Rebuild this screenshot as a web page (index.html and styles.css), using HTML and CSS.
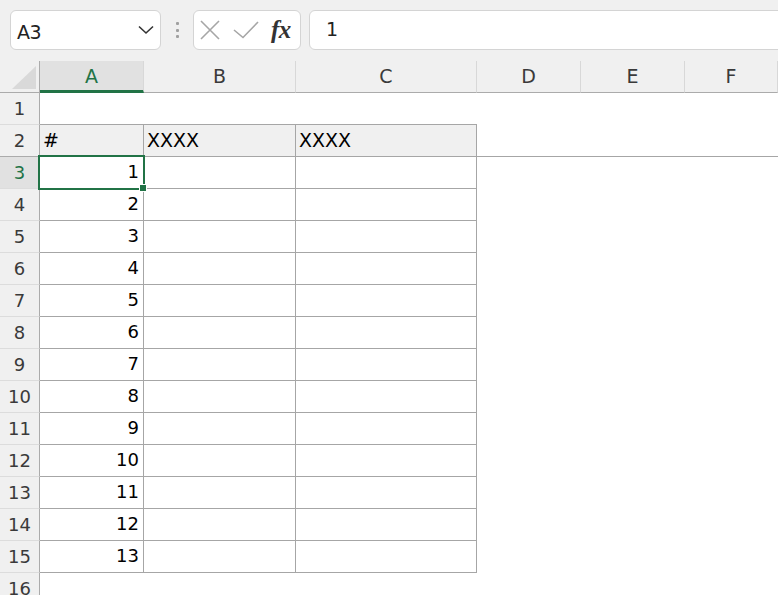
FILE: index.html
```html
<!DOCTYPE html>
<html lang="ja">
<head>
<meta charset="utf-8">
<title>Sheet</title>
<link rel="stylesheet" href="styles.css">
</head>
<body>
<div class="toolbar">
  <div class="namebox">
    <span class="name">A3</span>
    <svg class="chev" width="16" height="10" viewBox="0 0 16 10"><polyline points="1,1.5 8,8 15,1.5" fill="none" stroke="#333" stroke-width="1.6"/></svg>
  </div>
  <div class="grip"><i></i><i></i><i></i></div>
  <div class="fxbox">
    <svg class="ico" width="20" height="20" viewBox="0 0 20 20"><path d="M1 1 L19 19 M19 1 L1 19" stroke="#a6a6a6" stroke-width="1.6" fill="none"/></svg>
    <svg class="ico" width="26" height="18" viewBox="0 0 26 18"><polyline points="1,9 10,16.5 25,1" stroke="#a6a6a6" stroke-width="1.6" fill="none"/></svg>
    <span class="fx">fx</span>
  </div>
  <div class="formula">1</div>
</div>
<div class="sheet">
  <div class="corner"><span class="tri"></span></div>
  <div class="ch on">A</div><div class="ch">B</div><div class="ch">C</div><div class="ch">D</div><div class="ch">E</div><div class="ch">F</div>

  <div class="rh">1</div><div class="c top"></div><div class="c top"></div><div class="c top"></div><div class="c"></div><div class="c"></div><div class="c"></div>
  <div class="rh frz">2</div><div class="c t hd">#</div><div class="c t hd">XXXX</div><div class="c t hd">XXXX</div><div class="c frz"></div><div class="c frz"></div><div class="c frz"></div>
  <div class="rh on">3</div><div class="c t num sel">1<span class="selbox"></span><span class="handle"></span></div><div class="c t"></div><div class="c t"></div><div class="c"></div><div class="c"></div><div class="c"></div>
  <div class="rh">4</div><div class="c t num">2</div><div class="c t"></div><div class="c t"></div><div class="c"></div><div class="c"></div><div class="c"></div>
  <div class="rh">5</div><div class="c t num">3</div><div class="c t"></div><div class="c t"></div><div class="c"></div><div class="c"></div><div class="c"></div>
  <div class="rh">6</div><div class="c t num">4</div><div class="c t"></div><div class="c t"></div><div class="c"></div><div class="c"></div><div class="c"></div>
  <div class="rh">7</div><div class="c t num">5</div><div class="c t"></div><div class="c t"></div><div class="c"></div><div class="c"></div><div class="c"></div>
  <div class="rh">8</div><div class="c t num">6</div><div class="c t"></div><div class="c t"></div><div class="c"></div><div class="c"></div><div class="c"></div>
  <div class="rh">9</div><div class="c t num">7</div><div class="c t"></div><div class="c t"></div><div class="c"></div><div class="c"></div><div class="c"></div>
  <div class="rh">10</div><div class="c t num">8</div><div class="c t"></div><div class="c t"></div><div class="c"></div><div class="c"></div><div class="c"></div>
  <div class="rh">11</div><div class="c t num">9</div><div class="c t"></div><div class="c t"></div><div class="c"></div><div class="c"></div><div class="c"></div>
  <div class="rh">12</div><div class="c t num">10</div><div class="c t"></div><div class="c t"></div><div class="c"></div><div class="c"></div><div class="c"></div>
  <div class="rh">13</div><div class="c t num">11</div><div class="c t"></div><div class="c t"></div><div class="c"></div><div class="c"></div><div class="c"></div>
  <div class="rh">14</div><div class="c t num">12</div><div class="c t"></div><div class="c t"></div><div class="c"></div><div class="c"></div><div class="c"></div>
  <div class="rh">15</div><div class="c t num">13</div><div class="c t"></div><div class="c t"></div><div class="c"></div><div class="c"></div><div class="c"></div>
  <div class="rh">16</div><div class="c"></div><div class="c"></div><div class="c"></div><div class="c"></div><div class="c"></div><div class="c"></div>
</div>
</body>
</html>
```

FILE: styles.css
```css
* { box-sizing: border-box; }
html, body {
  margin: 0;
  padding: 0;
  width: 778px;
  height: 595px;
  overflow: hidden;
  background: #ffffff;
  font-family: "DejaVu Sans", "Noto Sans CJK JP", sans-serif;
  color: #000;
}

/* ---------- toolbar ---------- */
.toolbar {
  height: 61px;
  background: #f0f0f0;
  display: flex;
  align-items: flex-start;
  padding: 10px 0 0 10px;
  overflow: hidden;
}
.namebox {
  width: 151px;
  height: 40px;
  background: #fff;
  border: 1px solid #d4d4d4;
  border-radius: 6px;
  display: flex;
  align-items: center;
  justify-content: space-between;
  padding: 3px 6px 0 6px;
}
.name {
  font-size: 19px;
  color: #222;
  letter-spacing: -0.5px;
}
.chev { margin-top: -3px; }
.grip {
  width: 32px;
  height: 40px;
  display: flex;
  flex-direction: column;
  align-items: center;
  justify-content: center;
  gap: 3.5px;
}
.grip i {
  display: block;
  width: 3px;
  height: 3px;
  background: #a0a0a0;
  border-radius: 1px;
}
.fxbox {
  width: 108px;
  height: 40px;
  background: #fff;
  border: 1px solid #d4d4d4;
  border-radius: 6px;
  display: flex;
  align-items: center;
  padding: 0 0 0 6px;
  gap: 13px;
}
.fxbox .ico { flex: none; }
.fx {
  font-family: "Liberation Serif", "DejaVu Serif", serif;
  font-style: italic;
  font-weight: bold;
  font-size: 25px;
  color: #333;
  margin-left: -1px;
  letter-spacing: -0.5px;
}
.formula {
  flex: 1;
  height: 40px;
  margin-left: 8px;
  margin-right: -10px;
  background: #fff;
  border: 1px solid #d4d4d4;
  border-radius: 6px;
  padding: 7px 0 0 16px;
  font-size: 19px;
  color: #222;
}

/* ---------- sheet ---------- */
.sheet {
  display: grid;
  grid-template-columns: 40px 104px 152px 181px 104px 104px 1fr;
  grid-auto-rows: 32px;
  font-size: 18px;
}
.corner {
  background: #f0f0f0;
  border-bottom: 1px solid #ababab;
  border-right: 1px solid #ababab;
  position: relative;
}
.tri {
  position: absolute;
  left: 12px;
  top: 5px;
  width: 0;
  height: 0;
  border-left: 24px solid transparent;
  border-bottom: 23px solid #d9d9d9;
}
.ch {
  background: #f0f0f0;
  border-bottom: 1px solid #ababab;
  border-right: 1px solid #d8d8d8;
  display: flex;
  align-items: center;
  justify-content: center;
  color: #3a3a3a;
  font-size: 19px;
  padding-bottom: 2px;
}
.ch.on {
  background: #e1e1e1;
  color: #217346;
  border-bottom: 3px solid #217346;
  padding-bottom: 0;
}
.rh {
  background: #f0f0f0;
  border-right: 1px solid #ababab;
  border-bottom: 1px solid #dcdcdc;
  display: flex;
  align-items: center;
  justify-content: center;
  color: #3a3a3a;
}
.rh.frz { border-bottom-color: #ababab; }
.rh.on {
  background: #e1e1e1;
  color: #217346;
}
.c {
  display: flex;
  align-items: center;
  padding: 0 4px 2px 4px;
}
.c.top { border-bottom: 1px solid #a6a6a6; }
.c.frz { border-bottom: 1px solid #a6a6a6; }
.c.t {
  border-right: 1px solid #a6a6a6;
  border-bottom: 1px solid #a6a6a6;
}
.c.hd {
  background: #f0f0f0;
  padding-left: 3px;
  font-size: 19px;
}
.c.num { justify-content: flex-end; }
.c.sel { position: relative; }
.selbox {
  position: absolute;
  left: -2px;
  top: -2px;
  width: 107px;
  height: 35px;
  border: 2px solid #217346;
}
.handle {
  position: absolute;
  left: 100px;
  top: 28px;
  width: 6px;
  height: 6px;
  background: #217346;
  border: 1px solid #fff;
  box-sizing: content-box;
  margin: -1px 0 0 -1px;
}
```
